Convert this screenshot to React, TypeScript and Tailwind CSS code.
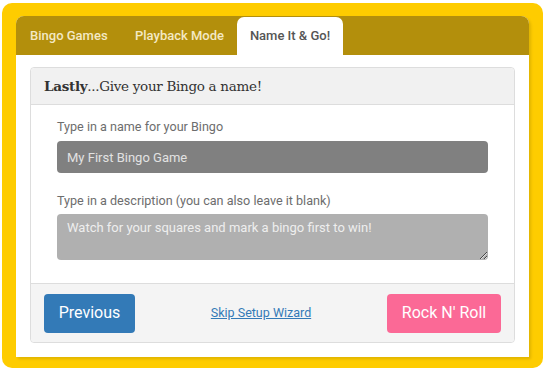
import { useState } from 'react'

const tabs = [
  { label: 'Bingo Games', w: 'w-[105px]' },
  { label: 'Playback Mode', w: 'w-[114px]' },
  { label: 'Name It & Go!', w: 'w-[106px]' },
]

export default function App() {
  const [active] = useState(2)
  const [name, setName] = useState('')
  const [desc, setDesc] = useState('')

  return (
    <div className="w-[546px] h-[372px] bg-white pt-[3px] pl-[2px]" style={{ fontFamily: 'Roboto, "Liberation Sans", sans-serif' }}>
      <div className="w-[541px] h-[365px] bg-[#fecc00] rounded-[10px] pt-[13px] pl-[14px] pr-[14px] pb-[11px]">
        <div className="h-full bg-white rounded-t-[8px] flex flex-col shadow-[2px_2px_3px_rgba(0,0,0,0.12)]">
          {/* Tabs */}
          <div className="h-[39px] bg-[#b38f0c] rounded-t-[8px] flex items-end pl-[2px] shrink-0">
            {tabs.map((t, i) => (
              <div
                key={t.label}
                className={
                  i === active
                    ? `${t.w} h-[38px] flex items-center justify-center bg-white rounded-t-[7px] text-[13px] font-medium text-[#555555]`
                    : `${t.w} h-[38px] pl-[12px] flex items-center text-[13px] font-medium text-[#f3e9c4]`
                }
              >
                {t.label}
              </div>
            ))}
          </div>

          {/* Card */}
          <div className="mx-[14px] mt-[12px] border border-[#dddddd] rounded-[4px] flex flex-col">
            <div
              className="h-[37px] bg-[#f1f1f1] border-b border-[#dddddd] rounded-t-[4px] flex items-center px-[13px] text-[13.5px] tracking-[-0.3px] text-[#333333]"
              style={{ fontFamily: '"DejaVu Serif", "Liberation Serif", serif' }}
            >
              <span className="font-bold">Lastly</span>
              <span>...Give your Bingo a name!</span>
            </div>

            <div className="px-[26px] pt-[14px] pb-[23px]">
              <label className="block text-[12.6px] text-[#6d6d6d] leading-[16px]">Type in a name for your Bingo</label>
              <input
                value={name}
                onChange={(e) => setName(e.target.value)}
                placeholder="My First Bingo Game"
                className="mt-[6px] block w-full h-[32px] bg-[#808080] rounded-[4px] px-[10px] text-[13px] text-white placeholder:text-[#e2e2e2] outline-none"
              />
              <label className="block mt-[20px] text-[12.6px] text-[#6d6d6d] leading-[16px]">Type in a description (you can also leave it blank)</label>
              <textarea
                value={desc}
                onChange={(e) => setDesc(e.target.value)}
                placeholder="Watch for your squares and mark a bingo first to win!"
                className="mt-[5px] block w-full h-[46px] bg-[#b0b0b0] rounded-[4px] px-[10px] pt-[6px] text-[13px] leading-[16px] text-white placeholder:text-[#eeeeee] outline-none"
              />
            </div>

            <div className="h-[59px] bg-[#f4f4f4] border-t border-[#dddddd] rounded-b-[4px] flex items-center justify-between px-[13px]">
              <button className="w-[91px] h-[39px] bg-[#337ab7] rounded-[4px] text-white text-[16px]">Previous</button>
              <a href="#" className="text-[12.5px] text-[#337ab7] underline">Skip Setup Wizard</a>
              <button className="w-[114px] h-[39px] bg-[#fb6996] rounded-[4px] text-white text-[16px]">Rock N' Roll</button>
            </div>
          </div>
        </div>
      </div>
    </div>
  )
}
